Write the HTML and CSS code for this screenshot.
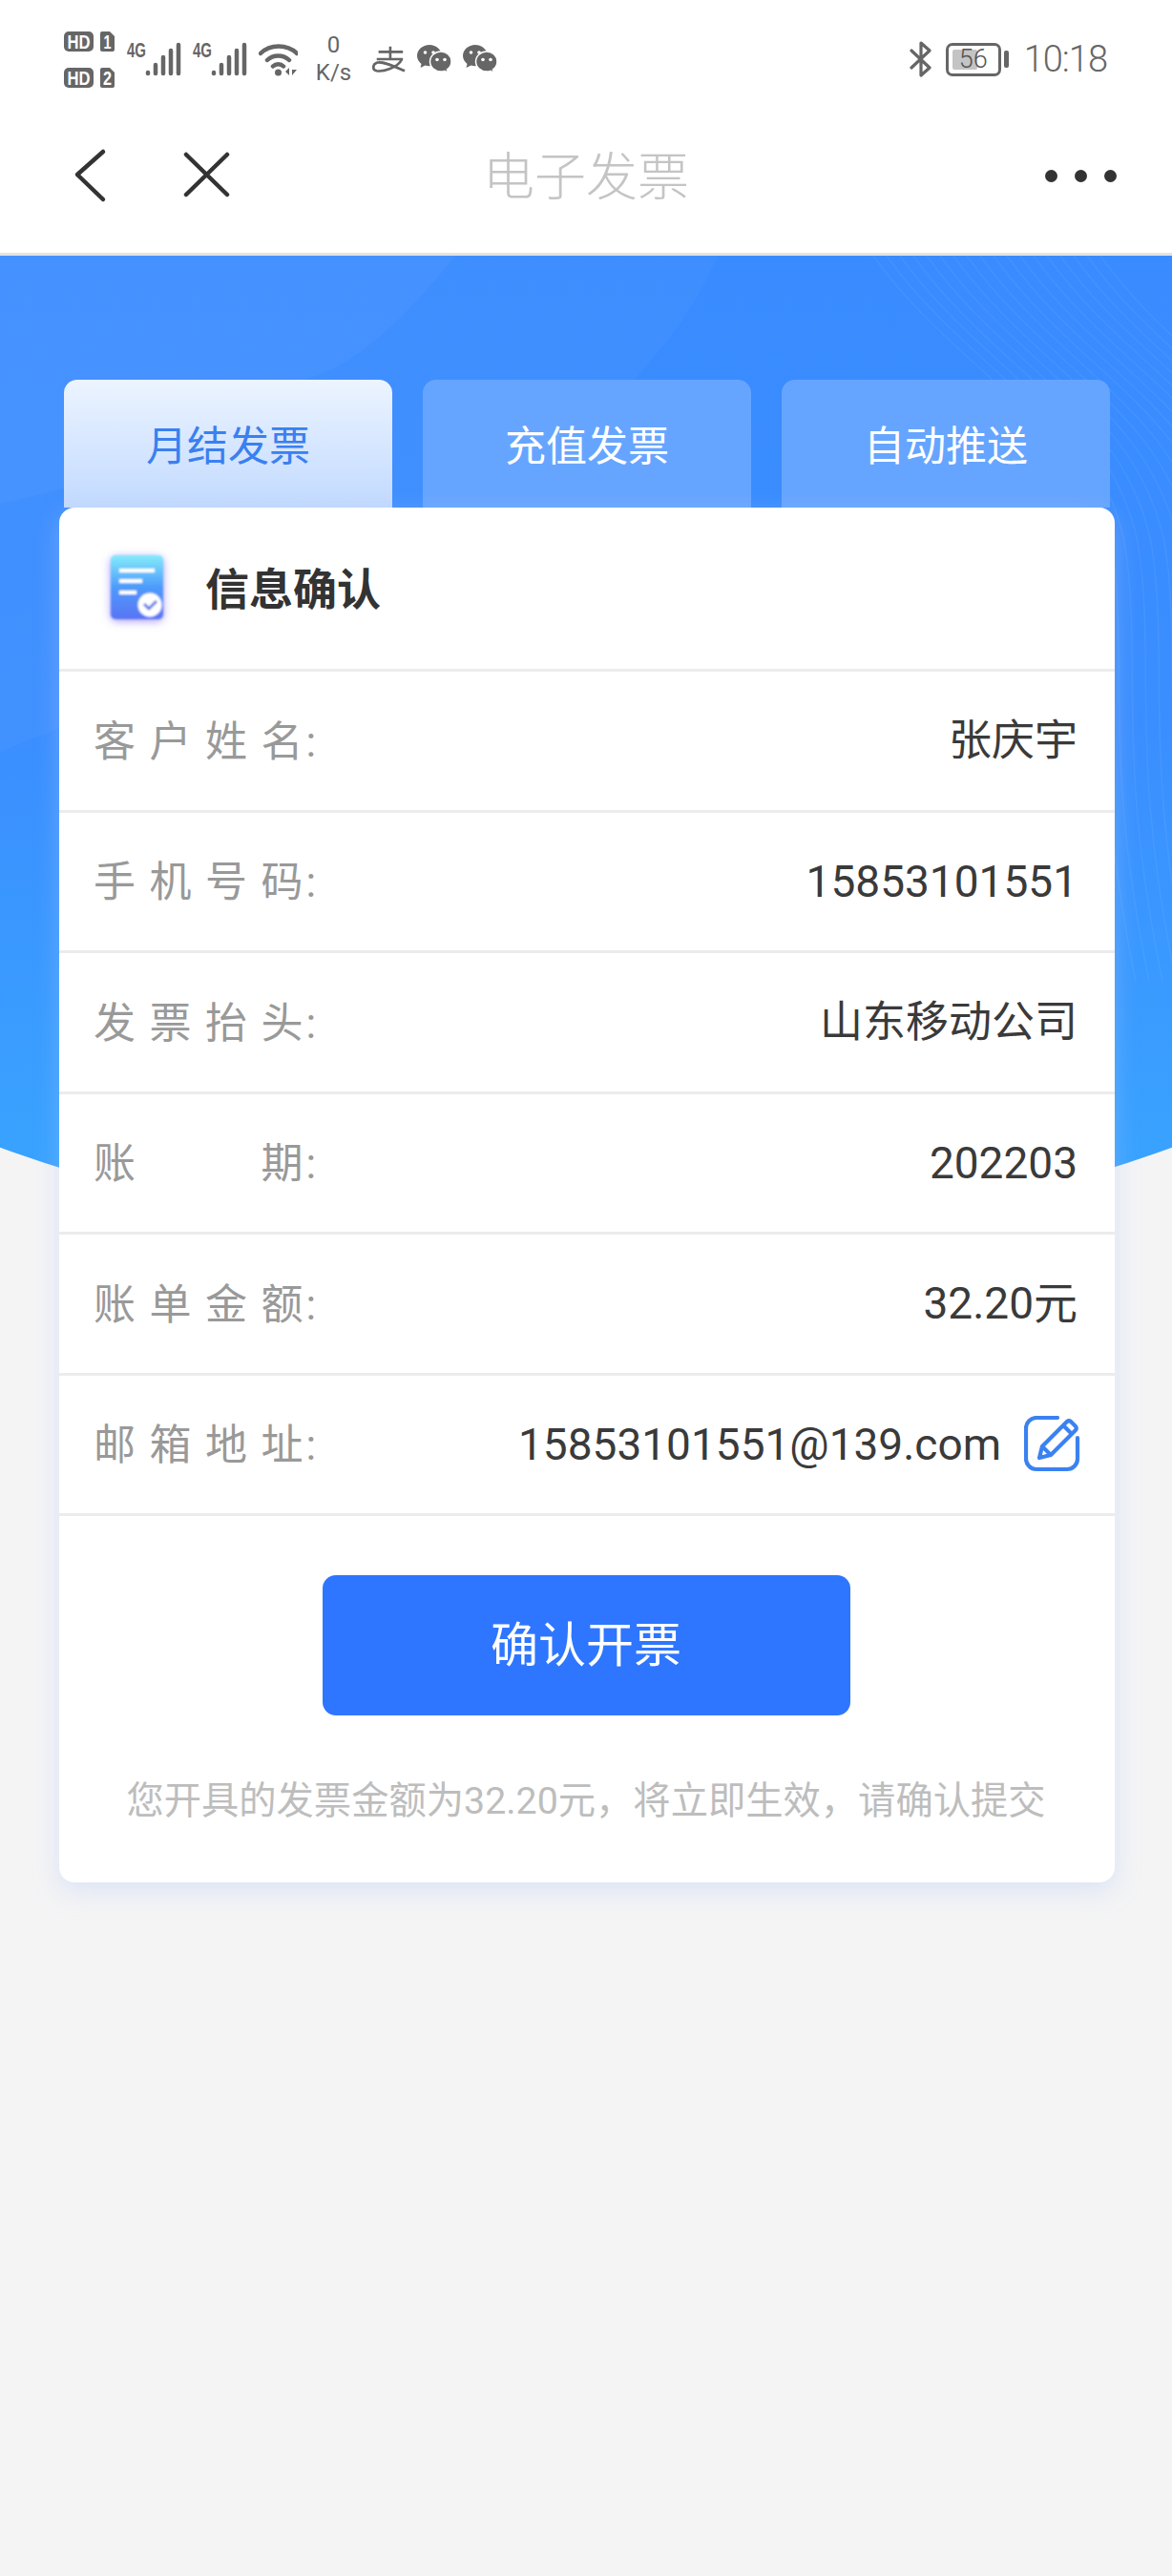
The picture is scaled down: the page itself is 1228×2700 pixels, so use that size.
FILE: index.html
```html
<!DOCTYPE html>
<html lang="zh-CN">
<head>
  <meta charset="UTF-8" />
  <title>电子发票</title>
  <meta name="viewport" content="width=device-width,initial-scale=1" />
  <link rel="stylesheet" href="styles.css">
</head>
<body>
  <!-- phone status bar -->
  <div class="statusbar">
    <div class="status-left">
      <svg class="sim" viewBox="0 0 54 61">
        <rect x="0" y="1" width="31" height="21" rx="5" fill="#666"/>
        <text x="15.500" y="18.500" text-anchor="middle" textLength="24" lengthAdjust="spacingAndGlyphs">HD</text>
        <path d="M38 3a2 2 0 0 1 2-2h8l5 5v14a2 2 0 0 1-2 2H40a2 2 0 0 1-2-2z" fill="#666"/>
        <text x="45.500" y="18.500" text-anchor="middle" textLength="8" lengthAdjust="spacingAndGlyphs">1</text>
        <rect x="0" y="39" width="31" height="21" rx="5" fill="#666"/>
        <text x="15.500" y="56.500" text-anchor="middle" textLength="24" lengthAdjust="spacingAndGlyphs">HD</text>
        <path d="M38 41a2 2 0 0 1 2-2h8l5 5v14a2 2 0 0 1-2 2H40a2 2 0 0 1-2-2z" fill="#666"/>
        <text x="45.500" y="56.500" text-anchor="middle" textLength="9" lengthAdjust="spacingAndGlyphs">2</text>
      </svg>
      <svg class="signal" viewBox="0 0 57 35">
        <text class="net" x="0" y="15" textLength="20" lengthAdjust="spacingAndGlyphs">4G</text>
        <path d="M22 31v1M30 23v9M38 15v17M46 8v24M54 2v30"/>
      </svg>
      <svg class="signal" viewBox="0 0 57 35">
        <text class="net" x="0" y="15" textLength="20" lengthAdjust="spacingAndGlyphs">4G</text>
        <path d="M22 31v1M30 23v9M38 15v17M46 8v24M54 2v30"/>
      </svg>
      <svg class="wifi" viewBox="0 0 41 35">
        <path d="M2 11C12 1 30 1 40 11M9 18c6-6 17-6 23 0M15 24.500c3-3 8-3 11 0" fill="none" stroke="#666" stroke-width="4.500" stroke-linecap="round"/>
        <circle cx="20.500" cy="31" r="3.500" fill="#666"/>
        <path d="M32 26v8l-4-4zM35 26v8l5-6h-5z" fill="#666"/>
      </svg>
      <div class="speed"><span>0</span><span>K/s</span></div>
      <svg class="alipay" viewBox="0 0 37 28">
        <path d="M7 6h27M20 0v14M5 14h29M33 14C28 24 12 28 5 27 0 26 0 20 5 18c7-2 19 4 31 9" fill="none" stroke="#666" stroke-width="2.800"/>
      </svg>
      <svg class="wechat" viewBox="0 0 36 30">
        <path d="M13 0C6 0 0 5 0 11.500c0 3.500 2 6.500 4.500 8.500L3.500 24l5-2.500c1.500.5 3 .7 4.500.7 7 0 13-4.700 13-10.700S20 0 13 0z" fill="#666"/>
        <circle cx="8.500" cy="8" r="1.800" fill="#fff"/><circle cx="17" cy="8" r="1.800" fill="#fff"/>
        <path d="M25 7c-6 0-11.500 4.500-11.500 10.500S19 28 25 28c1.300 0 2.700-.2 3.900-.6l3.600 2-1-3.500c2.800-2 4.500-5 4.500-8.400C36 11.500 31 7 25 7z" fill="#666" stroke="#fff" stroke-width="1.500"/>
        <circle cx="21" cy="15.500" r="1.800" fill="#fff"/><circle cx="29" cy="15.500" r="1.800" fill="#fff"/>
      </svg>
      <svg class="wechat" viewBox="0 0 36 30">
        <path d="M13 0C6 0 0 5 0 11.500c0 3.500 2 6.500 4.500 8.500L3.500 24l5-2.500c1.500.5 3 .7 4.500.7 7 0 13-4.700 13-10.700S20 0 13 0z" fill="#666"/>
        <circle cx="8.500" cy="8" r="1.800" fill="#fff"/><circle cx="17" cy="8" r="1.800" fill="#fff"/>
        <path d="M25 7c-6 0-11.500 4.500-11.500 10.500S19 28 25 28c1.300 0 2.700-.2 3.900-.6l3.600 2-1-3.500c2.800-2 4.500-5 4.500-8.400C36 11.500 31 7 25 7z" fill="#666" stroke="#fff" stroke-width="1.500"/>
        <circle cx="21" cy="15.500" r="1.800" fill="#fff"/><circle cx="29" cy="15.500" r="1.800" fill="#fff"/>
      </svg>
    </div>
    <div class="status-right">
      <svg class="bt" viewBox="0 0 23 38">
        <path d="M2 10l19 18-9 8V2l9 8L2 28" fill="none" stroke="#666" stroke-width="3.200" stroke-linejoin="round" stroke-linecap="round"/>
      </svg>
      <div class="battery">
        <div class="battery-body"><div class="battery-fill"></div><span>56</span></div>
        <div class="battery-nub"></div>
      </div>
      <div class="time">10:18</div>
    </div>
  </div>

  <!-- top nav -->
  <div class="nav">
    <svg class="nav-icon nav-back" viewBox="0 0 35 60">
      <path d="M31 4L4 28l27 26"/>
    </svg>
    <svg class="nav-icon nav-close" viewBox="0 0 52 50">
      <path d="M4 3l43 42M47 3L4 45"/>
    </svg>
    <h1 class="nav-title">电子发票</h1>
    <div class="nav-more"><i></i><i></i><i></i></div>
  </div>

  <div class="main">
    <div class="hero">
      <svg viewBox="0 0 1228 1100" preserveAspectRatio="none">
        <path d="M0 0H752C725 60 700 90 663 132 600 220 500 300 300 400L0 520Z" fill="#fff" fill-opacity=".03"/>
        <path d="M0 0H477C420 70 370 120 310 132 200 200 100 240 0 260Z" fill="#fff" fill-opacity=".03"/>
        <defs>
          <path id="wave" d="M915 0C1000 120 1120 160 1150 300 1170 420 1140 520 1190 760" fill="none" stroke="#fff" stroke-opacity=".06" stroke-width="1.500"/>
        </defs>
        <use href="#wave"/>
        <use href="#wave" x="14"/>
        <use href="#wave" x="28"/>
        <use href="#wave" x="42"/>
        <use href="#wave" x="56"/>
        <use href="#wave" x="70"/>
        <use href="#wave" x="84"/>
        <use href="#wave" x="98"/>
        <use href="#wave" x="112"/>
        <use href="#wave" x="126"/>
        <use href="#wave" x="140"/>
        <use href="#wave" x="154"/>
        <use href="#wave" x="168"/>
        <use href="#wave" x="182"/>
        <use href="#wave" x="196"/>
        <use href="#wave" x="210"/>
        <use href="#wave" x="224"/>
        <use href="#wave" x="238"/>
      </svg>
    </div>

    <div class="tabs">
      <div class="tab tab-active">月结发票</div>
      <div class="tab">充值发票</div>
      <div class="tab">自动推送</div>
    </div>

    <div class="card">
      <div class="card-head">
        <svg class="doc-icon" viewBox="0 0 76 88">
          <defs>
            <linearGradient id="docFill" x1="0" y1="0" x2="0" y2="1">
              <stop offset="0" stop-color="#84ecfb"/>
              <stop offset=".5" stop-color="#4d9bfb"/>
              <stop offset="1" stop-color="#5a74f5"/>
            </linearGradient>
            <filter id="docGlow" x="-40%" y="-40%" width="180%" height="180%">
              <feGaussianBlur stdDeviation="5"/>
            </filter>
            <filter id="docSoft" x="-10%" y="-10%" width="120%" height="120%">
              <feGaussianBlur stdDeviation=".8"/>
            </filter>
          </defs>
          <rect x="10" y="13" width="55" height="67" rx="6" fill="#8f7bff" fill-opacity=".75" filter="url(#docGlow)"/>
          <g filter="url(#docSoft)">
            <rect x="10" y="11" width="55" height="67" rx="5" fill="url(#docFill)"/>
            <path d="M19 27h37M19 38h24M19 50h18" stroke="#fff" stroke-width="4" fill="none"/>
            <circle cx="51" cy="63" r="12.500" fill="#fff"/>
            <path d="M45 62l5 5 8-8" stroke="#5a78e8" stroke-width="3" fill="none"/>
          </g>
        </svg>
        <h2 class="card-title">信息确认</h2>
      </div>

      <div class="row"><span class="row-label"><span class="spaced">客户姓</span>名:</span><span class="row-value row-value-cn">张庆宇</span></div>
      <div class="row"><span class="row-label"><span class="spaced">手机号</span>码:</span><span class="row-value">15853101551</span></div>
      <div class="row"><span class="row-label"><span class="spaced">发票抬</span>头:</span><span class="row-value row-value-cn">山东移动公司</span></div>
      <div class="row"><span class="row-label"><span class="spaced">账　　</span>期:</span><span class="row-value">202203</span></div>
      <div class="row"><span class="row-label"><span class="spaced">账单金</span>额:</span><span class="row-value">32.20元</span></div>
      <div class="row">
        <span class="row-label"><span class="spaced">邮箱地</span>址:</span>
        <span class="row-value">15853101551@139.com
          <svg class="edit-icon" viewBox="0 0 60 60">
            <path d="M35 2H13A11 11 0 0 0 2 13v32a11 11 0 0 0 11 11h32a11 11 0 0 0 11-11V23"/>
            <path d="M16 44l3-12L45 6q2-1.500 4 0l5 5q1.500 2 0 4L28 41zM19 32l9 9M41 10l9 9"/>
          </svg>
        </span>
      </div>

      <div class="card-foot">
        <button class="confirm-btn" type="button">确认开票</button>
        <p class="hint">您开具的发票金额为32.20元，将立即生效，请确认提交</p>
      </div>
    </div>
  </div>
</body>
</html>
```

FILE: styles.css
```css
* {
    box-sizing: border-box;
}

body {
    margin: 0;
    min-height: 100vh;
    background-color: #f4f4f5;
    font-family: Roboto, "Noto Sans CJK SC", sans-serif;
    color: #333;
}

/* status bar */
.statusbar {
    height: 106px;
    padding: 30px 68px 12px 67px;
    display: flex;
    justify-content: space-between;
    align-items: center;
    background-color: #fff;
    color: #666;
}

.status-left,
.status-right {
    display: flex;
    align-items: center;
}

.status-left {
    gap: 12px;
}

.sim {
    width: 54px;
    height: 61px;
    overflow: visible;
}

.sim text {
    font-family: "Liberation Sans", sans-serif;
    font-size: 20px;
    font-weight: 700;
    fill: #fff;
}

.signal {
    width: 57px;
    height: 35px;
    overflow: visible;
}

.signal text {
    font-family: "Liberation Sans", sans-serif;
    font-size: 22px;
    font-weight: 700;
    fill: #666;
}

.signal path {
    fill: none;
    stroke: #666;
    stroke-width: 4.5;
    stroke-linecap: round;
}

.wifi {
    width: 41px;
    height: 35px;
}

.speed {
    width: 37px;
    margin: 0 10px 0 7px;
    display: flex;
    flex-direction: column;
    align-items: center;
    font-size: 24px;
    line-height: 29px;
    color: #666;
}

.alipay {
    width: 35px;
    height: 28px;
}

.wechat {
    width: 36px;
    height: 30px;
}

.bt {
    width: 23px;
    height: 38px;
    margin-right: 15px;
}

.battery {
    display: flex;
    align-items: center;
    gap: 3px;
    margin-right: 16px;
}

.battery-body {
    position: relative;
    width: 58px;
    height: 35px;
    border: 3px solid #666;
    border-radius: 7px;
}

.battery-fill {
    position: absolute;
    left: 4px;
    top: 4px;
    bottom: 4px;
    width: 26px;
    background-color: #c4c4c4;
    border-radius: 2px;
}

.battery-body span {
    position: absolute;
    left: 0;
    right: 0;
    top: 0;
    text-align: center;
    font-size: 27px;
    line-height: 29px;
    font-weight: 300;
    color: #555;
}

.battery-nub {
    width: 5px;
    height: 18px;
    background-color: #666;
    border-radius: 2px;
}

.time {
    font-size: 38px;
    line-height: 44px;
    font-weight: 300;
    letter-spacing: -1px;
    color: #666;
}

/* nav */
.nav {
    position: relative;
    height: 162px;
    padding-top: 3px;
    display: flex;
    align-items: center;
    justify-content: center;
    background-color: #fff;
    border-bottom: 3px solid #e3e3e3;
}

.nav-icon {
    position: absolute;
    fill: none;
    stroke: #333;
    stroke-width: 4.5;
    stroke-linecap: round;
    stroke-linejoin: round;
}

.nav-back {
    left: 77px;
    top: 49px;
    width: 35px;
    height: 60px;
}

.nav-close {
    left: 191px;
    top: 53px;
    width: 52px;
    height: 50px;
}

.nav-title {
    margin: 0;
    font-size: 54px;
    line-height: 60px;
    font-weight: 300;
    color: #c4c4c4;
}

.nav-more {
    position: absolute;
    right: 58px;
    top: 72px;
    display: flex;
    gap: 18px;
}

.nav-more i {
    width: 13px;
    height: 13px;
    border-radius: 50%;
    background-color: #333;
}

/* blue arc behind the card */
.main {
    position: relative;
    padding: 130px 60px 0 62px;
}

.hero {
    position: absolute;
    left: 0;
    right: 0;
    top: 0;
    height: 1100px;
    background: linear-gradient(180deg, #398bff 0%, #3b8eff 45%, #39a2ff 85%);
    clip-path: ellipse(1400px 1040px at 50% 0);
}

.hero svg {
    display: block;
    width: 100%;
    height: 100%;
}

.tabs {
    position: relative;
    display: grid;
    grid-template-columns: repeat(3, 1fr);
    gap: 32px;
    padding: 0 5px;
}

.tab {
    height: 134px;
    padding-top: 6px;
    display: flex;
    align-items: center;
    justify-content: center;
    border-radius: 14px 14px 0 0;
    background-color: #66a5ff;
    color: #fff;
    font-size: 43px;
    line-height: 60px;
}

.tab-active {
    background: linear-gradient(180deg, #ecf4ff 0%, #c2daff 100%);
    color: #3a80f0;
}

.card {
    position: relative;
    background-color: #fff;
    border-radius: 16px;
    box-shadow: 0 8px 26px rgba(175, 200, 245, .38);
}

.card-head {
    height: 172px;
    padding: 0 0 3px 44px;
    display: flex;
    align-items: center;
    border-bottom: 3px solid #ececee;
}

.doc-icon {
    width: 76px;
    height: 88px;
    margin-right: 33px;
    overflow: visible;
}

.card-title {
    margin: 0;
    padding-top: 6px;
    font-size: 46px;
    line-height: 60px;
    font-weight: 700;
    color: #333;
}

.row {
    height: 147.5px;
    padding: 0 39px 0 36px;
    display: flex;
    align-items: center;
    justify-content: space-between;
    border-bottom: 3px solid #ececee;
}

.row-label {
    padding-top: 3px;
    font-size: 44px;
    line-height: 60px;
    letter-spacing: 3px;
    color: #999;
}

.spaced {
    letter-spacing: 14.5px;
}

.row-value {
    display: flex;
    align-items: center;
    font-size: 46px;
    line-height: 60px;
    color: #3a3a3a;
}

.row-value-cn {
    padding-top: 2px;
    font-size: 45px;
}

.edit-icon {
    width: 60px;
    height: 60px;
    margin-left: 24px;
    margin-right: -4px;
    fill: none;
    stroke: #3b82f0;
    stroke-width: 4.2;
    stroke-linecap: round;
    stroke-linejoin: round;
}

.card-foot {
    padding: 62px 2px 55px 0;
    text-align: center;
}

.confirm-btn {
    display: block;
    width: 553px;
    height: 147px;
    margin: 0 auto;
    border: 0;
    border-radius: 14px;
    background-color: #2e76ff;
    color: #fff;
    font-family: inherit;
    font-size: 50px;
    line-height: 60px;
}

.hint {
    margin: 60px 0 0;
    font-size: 39.3px;
    line-height: 60px;
    color: #bdbdbd;
}
```
